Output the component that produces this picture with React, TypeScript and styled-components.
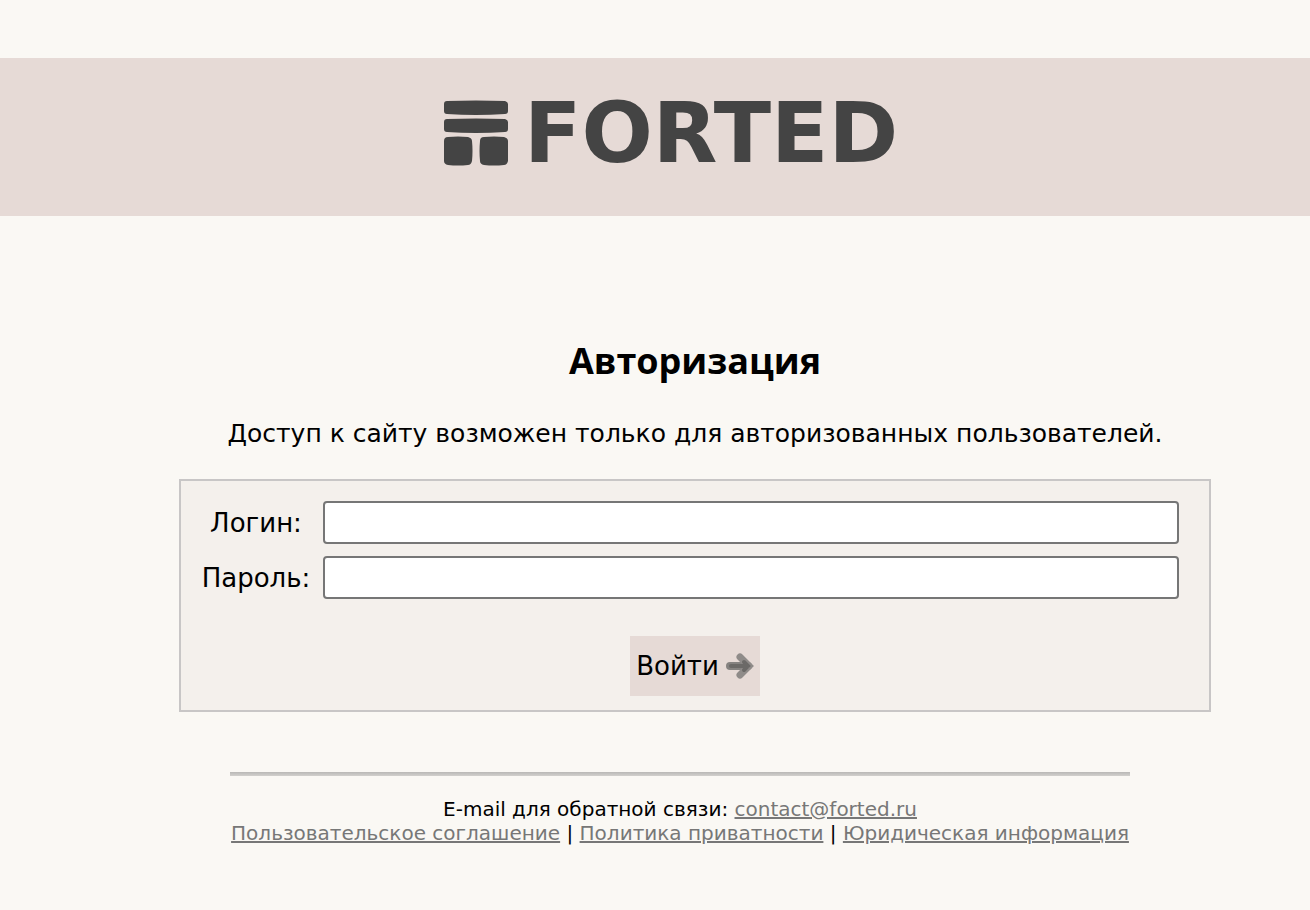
import React from "react";
import styled, { createGlobalStyle } from "styled-components";

const GlobalStyle = createGlobalStyle`
  * { box-sizing: border-box; }
  body {
    margin: 0;
    background: #faf8f4;
    color: #000;
    font-family: "DejaVu Sans", Verdana, sans-serif;
  }
`;

const Page = styled.div`
  padding: 58px 0 64px;
`;

const Header = styled.header`
  display: flex;
  justify-content: center;
  padding: 32px 0 40px 58px;
  background: #e6dad6;
`;

const Logo = styled.a`
  display: flex;
  align-items: center;
  gap: 16px;
  width: 480px;
  height: 86px;
  color: #444;
  text-decoration: none;
`;

const LogoMark = styled.svg`
  flex: none;
  width: 64px;
  height: 66px;
`;

const LogoText = styled.span`
  font-size: 84px;
  font-weight: bold;
  line-height: 84px;
`;

const Main = styled.main`
  display: flex;
  flex-direction: column;
  align-items: center;
  padding: 120px 99px 60px 179px;
`;

const Title = styled.h1`
  margin: 0;
  font: bold 36px/50px "Open Sans", "Noto Sans", sans-serif;
`;

const Intro = styled.p`
  margin: 32px 0 29px;
  font-size: 25px;
  line-height: 32px;
`;

const LoginForm = styled.form`
  display: flex;
  flex-direction: column;
  align-items: center;
  width: 100%;
  padding: 20px 30px 14px 20px;
  border: 2px solid #c8c6c6;
  background: #f4f0ec;
`;

const Fields = styled.div`
  display: grid;
  grid-template-columns: 110px 1fr;
  gap: 12px;
  align-items: center;
  width: 100%;
`;

const Label = styled.label`
  font-size: 26px;
  line-height: 32px;
  text-align: center;
`;

const Input = styled.input`
  width: 100%;
  height: 43px;
  padding: 2px 6px;
  border: 2px solid #767676;
  border-radius: 4px;
  background: #fff;
  font: inherit;
  font-size: 26px;
`;

const Submit = styled.button`
  display: flex;
  align-items: center;
  gap: 7px;
  height: 60px;
  margin: 37px 0 0 10px;
  padding: 0 6px;
  border: 0;
  background: #e6dad6;
  color: #000;
  font: inherit;
  font-size: 26px;
  cursor: pointer;
`;

const Arrow = styled.svg`
  width: 28px;
  height: 26px;
`;

const Footer = styled.footer`
  display: flex;
  flex-direction: column;
  align-items: center;
  padding-left: 50px;
  font-size: 20px;
  line-height: 24px;
  text-align: center;
`;

const Rule = styled.hr`
  width: 900px;
  max-width: 100%;
  height: 4px;
  margin: 0 0 21px;
  border: 0;
  background: linear-gradient(#b9b8b6, #d2d0cd);
`;

const FooterLine = styled.div``;

const FooterLink = styled.a`
  color: #777;
  text-decoration: underline;
`;

export default function App() {
  return (
    <>
      <GlobalStyle />
      <Page>
        <Header>
          <Logo href="#" aria-label="FORTED">
            <LogoMark viewBox="0 0 64 66" fill="#444" aria-hidden="true">
              <path d="M3 1Q32 0 61 1Q64 2 64 4V11Q64 14 61 14Q32 16 3 14Q0 14 0 11V4Q0 1 3 1Z" />
              <path d="M3 19Q32 18 61 19Q64 20 64 22V29Q64 32 61 32Q32 34 3 32Q0 32 0 29V22Q0 19 3 19Z" />
              <path d="M4 37Q14 36 24 37Q28 38 28 41Q29 51 28 61Q27 65 24 65Q14 66 4 65Q0 64 0 61Q-1 51 0 41Q0 37 4 37Z" />
              <path d="M40 37Q50 36 60 37Q64 38 64 41Q65 51 64 61Q63 65 60 65Q50 66 40 65Q36 64 36 61Q35 51 36 41Q36 37 40 37Z" />
            </LogoMark>
            <LogoText>FORTED</LogoText>
          </Logo>
        </Header>
        <Main>
          <Title>Авторизация</Title>
          <Intro>Доступ к сайту возможен только для авторизованных пользователей.</Intro>
          <LoginForm onSubmit={(event: React.FormEvent) => event.preventDefault()}>
            <Fields>
              <Label htmlFor="login">Логин:</Label>
              <Input id="login" name="login" type="text" />
              <Label htmlFor="password">Пароль:</Label>
              <Input id="password" name="password" type="password" />
            </Fields>
            <Submit type="submit">
              Войти
              <Arrow viewBox="0 0 28 26" fill="none" strokeLinecap="round" aria-hidden="true">
                <path d="M4 13H22" stroke="#858280" strokeWidth="8" />
                <path d="M14 4L23 13L14 22" stroke="#8f8b89" strokeWidth="7" />
                <path d="M5 13H22M18 9L22 13L18 17" stroke="#6b6967" strokeWidth="4" />
              </Arrow>
            </Submit>
          </LoginForm>
        </Main>
        <Footer>
          <Rule />
          <FooterLine>
            E-mail для обратной связи: <FooterLink href="mailto:contact@forted.ru">contact@forted.ru</FooterLink>
          </FooterLine>
          <FooterLine>
            <FooterLink href="#agreement">Пользовательское соглашение</FooterLink> |{" "}
            <FooterLink href="#privacy">Политика приватности</FooterLink> |{" "}
            <FooterLink href="#legal">Юридическая информация</FooterLink>
          </FooterLine>
        </Footer>
      </Page>
    </>
  );
}
